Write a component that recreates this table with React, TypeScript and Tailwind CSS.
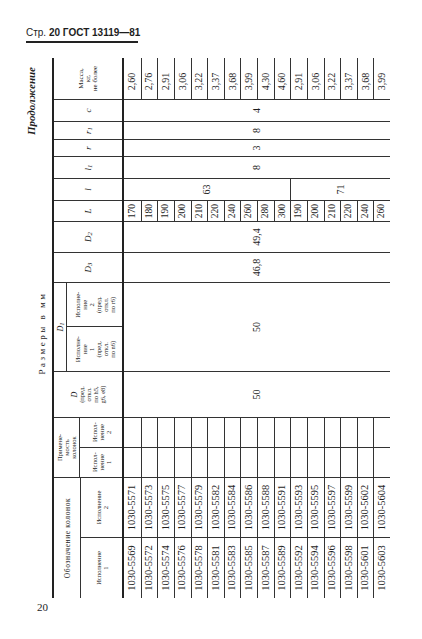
import { Fragment, type ReactNode } from 'react';
import clsx from 'clsx';

const massa = ['2,60', '2,76', '2,91', '3,06', '3,22', '3,37', '3,68', '3,99', '4,30', '4,60', '2,91', '3,06', '3,22', '3,37', '3,68', '3,99'];
const lengths = ['170', '180', '190', '200', '210', '220', '240', '260', '280', '300', '190', '200', '210', '220', '240', '260'];
const isp1 = ['5569', '5572', '5574', '5576', '5578', '5581', '5583', '5585', '5587', '5589', '5592', '5594', '5596', '5598', '5601', '5603'];
const isp2 = ['5571', '5573', '5575', '5577', '5579', '5582', '5584', '5586', '5588', '5591', '5593', '5595', '5597', '5599', '5602', '5604'];

function Cell({ top, left = true, className, children }: { top?: boolean; left?: boolean; className?: string; children?: ReactNode }) {
  return (
    <div
      className={clsx(
        'flex items-center justify-center border-[#333] leading-none whitespace-nowrap',
        top && 'border-t',
        left && 'border-l',
        className,
      )}
    >
      {children}
    </div>
  );
}

function Letter({ w, children }: { w: string; children: ReactNode }) {
  return (
    <div className={clsx('flex items-center justify-center border-l border-[#333] text-[9px] italic leading-none', w)}>
      <span>{children}</span>
    </div>
  );
}

function Header() {
  return (
    <div className="flex h-[72px] border-y-2 border-[#222] text-center text-[6.5px] leading-[7px]">
      {/* Обозначение колонок */}
      <div className="flex w-[120px] flex-col">
        <div className="flex h-[26px] items-center justify-center text-[7.5px] tracking-[0.6px]">Обозначение колонок</div>
        <div className="flex flex-1 border-t border-[#333]">
          <div className="flex w-[60px] items-center justify-center">
            Исполнение
            <br />1
          </div>
          <div className="flex w-[60px] items-center justify-center border-l border-[#333]">
            Исполнение
            <br />2
          </div>
        </div>
      </div>
      {/* Применяемость */}
      <div className="flex w-[60px] flex-col border-l border-[#333]">
        <div className="flex h-[25px] items-center justify-center">
          Примене-
          <br />
          мость
          <br />
          колонок
        </div>
        <div className="flex flex-1 border-t border-[#333]">
          <div className="flex w-[30px] items-center justify-center">
            Испол-
            <br />
            нение
            <br />1
          </div>
          <div className="flex w-[30px] items-center justify-center border-l border-[#333]">
            Испол-
            <br />
            нение
            <br />2
          </div>
        </div>
      </div>
      {/* D */}
      <div className="flex w-[46px] items-center justify-center border-l border-[#333]">
        <span>
          <i className="text-[8px]">D</i>
          <br />
          (пред.
          <br />
          откл.
          <br />
          по h5,
          <br />
          g6, e8)
        </span>
      </div>
      {/* D1 */}
      <div className="flex w-[89px] flex-col border-l border-[#333]">
        <div className="flex h-[12px] items-center justify-center text-[8px] italic">
          D<sub>1</sub>
        </div>
        <div className="flex flex-1 border-t border-[#333]">
          <div className="flex w-[44px] items-center justify-center">
            <span>
              Исполне-
              <br />
              ние
              <br />1<br />
              (пред.
              <br />
              откл.
              <br />
              по n6)
            </span>
          </div>
          <div className="flex w-[45px] items-center justify-center border-l border-[#333]">
            <span>
              Исполне-
              <br />
              ние
              <br />2<br />
              (пред.
              <br />
              откл.
              <br />
              по r6)
            </span>
          </div>
        </div>
      </div>
      <Letter w="w-[30px]">
        D<sub>3</sub>
      </Letter>
      <Letter w="w-[31px]">
        D<sub>2</sub>
      </Letter>
      <Letter w="w-[21px]">L</Letter>
      <Letter w="w-[22px]">l</Letter>
      <Letter w="w-[22px]">
        l<sub>1</sub>
      </Letter>
      <Letter w="w-[17px]">r</Letter>
      <Letter w="w-[18px]">
        r<sub>1</sub>
      </Letter>
      <Letter w="w-[22px]">c</Letter>
      <div className="flex w-[42px] items-center justify-center border-l border-[#333] text-[7px] leading-[7px]">
        <span>
          Масса,
          <br />
          кг,
          <br />
          не более
        </span>
      </div>
    </div>
  );
}

function Body() {
  return (
    <div className="grid h-[266px] grid-flow-col grid-cols-[60px_60px_30px_30px_46px_44px_45px_30px_31px_21px_22px_22px_17px_18px_22px_42px] grid-rows-[repeat(16,minmax(0,1fr))] text-[10px]">
      {isp1.map((v, i) => (
        <Cell key={'a' + i} top={i > 0} left={false} className="text-[10.5px]">
          1030-{v}
        </Cell>
      ))}
      {isp2.map((v, i) => (
        <Cell key={'b' + i} top={i > 0} className="text-[10.5px]">
          1030-{v}
        </Cell>
      ))}
      {isp1.map((_, i) => (
        <Cell key={'c' + i} top={i > 0} />
      ))}
      {isp1.map((_, i) => (
        <Cell key={'d' + i} top={i > 0} />
      ))}
      <Cell className="row-span-16">50</Cell>
      <Cell className="col-span-2 row-span-16">50</Cell>
      <Cell className="row-span-16">46,8</Cell>
      <Cell className="row-span-16">49,4</Cell>
      {lengths.map((v, i) => (
        <Cell key={'l' + i} top={i > 0} className="text-[9.5px]">
          {v}
        </Cell>
      ))}
      <Cell className="row-span-10">63</Cell>
      <Cell top className="row-span-6">
        71
      </Cell>
      <Cell className="row-span-16">8</Cell>
      <Cell className="row-span-16">3</Cell>
      <Cell className="row-span-16">8</Cell>
      <Cell className="row-span-16">4</Cell>
      {massa.map((v, i) => (
        <Fragment key={'m' + i}>
          <Cell top={i > 0} className="pr-[6px]">
            {v}
          </Cell>
        </Fragment>
      ))}
    </div>
  );
}

export default function App() {
  return (
    <div className="h-[639px] w-[422px] overflow-hidden bg-white text-[#1d1d1d]">
      <div className="ml-[26px] pt-[27px]">
        <div className="w-[112px] whitespace-nowrap border-b-2 border-[#222] pb-[2px] font-['Liberation_Sans',Arial,sans-serif] text-[10px] leading-[12px]">
          <span>Стр.</span> <span className="font-bold">20 ГОСТ 13119—81</span>
        </div>
      </div>

      <div className="ml-[24px] mt-[15px] h-[540px] w-[372px]">
        <div className="flex h-[372px] w-[540px] origin-top-left flex-col font-['Liberation_Serif','Times_New_Roman',serif] [transform:translateY(540px)_rotate(-90deg)]">
          <div className="flex h-[14px] items-center justify-end pr-[9px] text-[11px] font-bold italic leading-none">
            Продолжение
          </div>
          <div className="flex h-[14px] items-center justify-center pb-[6px] pr-[10px] text-[9px] leading-none tracking-[2.5px]">
            Размеры в мм
          </div>
          <Header />
          <Body />
        </div>
      </div>

      <div className="ml-[37px] mt-[3px] font-['Liberation_Serif','Times_New_Roman',serif] text-[11px] leading-[13px]">20</div>
    </div>
  );
}
